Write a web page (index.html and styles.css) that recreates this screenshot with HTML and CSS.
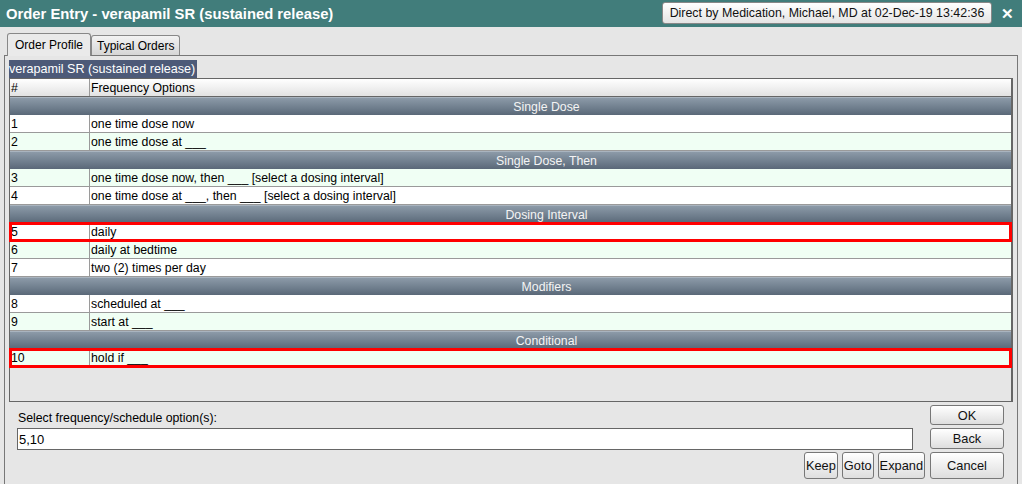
FILE: index.html
```html
<!DOCTYPE html>
<html lang="en">

<head>
    <meta charset="UTF-8">
    <title>Order Entry - verapamil SR (sustained release)</title>
    <link rel="stylesheet" href="styles.css">
</head>

<body>
    <div class="window">
        <div class="titlebar">
            <div class="title">Order Entry - verapamil SR (sustained release)</div>
            <div class="provider">Direct by Medication, Michael, MD at 02-Dec-19 13:42:36</div>
            <div class="close">&#x2715;</div>
        </div>

        <div class="tabs">
            <div class="tab active">Order Profile</div>
            <div class="tab">Typical Orders</div>
        </div>

        <div class="panel">
            <div class="caption">verapamil SR (sustained release)</div>
            <div class="grid">
                <div class="row head">
                    <div class="num">#</div>
                    <div class="text">Frequency Options</div>
                </div>

                <div class="group">Single Dose</div>
                <div class="row"><div class="num">1</div><div class="text">one time dose now</div></div>
                <div class="row alt"><div class="num">2</div><div class="text">one time dose at ___</div></div>

                <div class="group">Single Dose, Then</div>
                <div class="row alt"><div class="num">3</div><div class="text">one time dose now, then ___ [select a dosing interval]</div></div>
                <div class="row"><div class="num">4</div><div class="text">one time dose at ___, then ___ [select a dosing interval]</div></div>

                <div class="group">Dosing Interval</div>
                <div class="row picked"><div class="num">5</div><div class="text">daily</div></div>
                <div class="row alt"><div class="num">6</div><div class="text">daily at bedtime</div></div>
                <div class="row"><div class="num">7</div><div class="text">two (2) times per day</div></div>

                <div class="group">Modifiers</div>
                <div class="row"><div class="num">8</div><div class="text">scheduled at ___</div></div>
                <div class="row alt"><div class="num">9</div><div class="text">start at ___</div></div>

                <div class="group">Conditional</div>
                <div class="row alt picked"><div class="num">10</div><div class="text">hold if ___</div></div>
            </div>

            <div class="footer">
                <div class="label">Select frequency/schedule option(s):</div>
                <button class="btn wide">OK</button>
                <div class="entry">5,10</div>
                <button class="btn wide">Back</button>
                <div class="actions">
                    <button class="btn">Keep</button>
                    <button class="btn">Goto</button>
                    <button class="btn">Expand</button>
                </div>
                <button class="btn wide">Cancel</button>
            </div>
        </div>
    </div>
</body>

</html>
```

FILE: styles.css
```css
body {
    margin: 0;
    font-family: "Liberation Sans", Arial, sans-serif;
    font-size: 12.3px;
    color: #000;
    background-color: #e6e6e6;
}

.window {
    width: 1022px;
    height: 484px;
    overflow: hidden;
}

.titlebar {
    height: 27px;
    background-color: #417d7b;
    display: flex;
    align-items: center;
    color: #fff;
}

.title {
    flex: 1;
    padding-left: 6px;
    font-size: 14.8px;
    font-weight: bold;
}

.provider {
    width: 330px;
    height: 22px;
    box-sizing: border-box;
    margin-top: -2px;
    border: 1px solid #888;
    border-radius: 3px;
    background: linear-gradient(#ffffff, #e4e4e4);
    color: #111;
    font-size: 12.4px;
    line-height: 20px;
    text-align: center;
    white-space: nowrap;
}

.close {
    width: 30px;
    text-align: center;
    font-size: 15px;
    font-weight: bold;
}

.tabs {
    display: flex;
    padding: 6px 0 0 7px;
    height: 22px;
    align-items: flex-end;
    font-size: 12px;
}

.tab {
    height: 19px;
    padding: 0 5px;
    border: 1px solid #888;
    border-bottom: none;
    border-radius: 3px 3px 0 0;
    background: linear-gradient(#f2f2f2, #d6d6d6);
    line-height: 20px;
}

.tab.active {
    height: 22px;
    padding: 0 7px;
    background: #eaeaea;
    line-height: 23px;
    position: relative;
    top: 1px;
}

.panel {
    margin: 0 4px 0 4px;
    height: 430px;
    border: 1px solid #777;
    border-bottom: none;
    padding: 4px 4px 0 4px;
    box-sizing: border-box;
}

.caption {
    display: inline-block;
    height: 18px;
    line-height: 18px;
    padding-right: 2px;
    background-color: #4d5a78;
    color: #fff;
    font-size: 12.6px;
}

.grid {
    height: 324px;
    border: 1px solid #666;
    border-right-width: 2px;
    box-sizing: border-box;
    background-color: #e6e6e6;
}

.row {
    display: flex;
    height: 18px;
    border-bottom: 1px solid #9a9a9a;
    box-sizing: border-box;
    background-color: #fff;
    line-height: 19px;
}

.row.alt {
    background-color: #f0fff4;
}

.row.head {
    background: linear-gradient(#ffffff, #e2e2e2);
    border-bottom-color: #666;
}

.num {
    width: 78px;
    padding-left: 1px;
    border-right: 1px solid #9a9a9a;
}

.text {
    padding-left: 1px;
}

.row.picked {
    outline: 3px solid #f00;
    outline-offset: -2px;
}

.group {
    height: 18px;
    line-height: 18px;
    padding-left: 72px;
    background: linear-gradient(#8c9aa8, #6e7d8c 60%, #5a6878);
    border-top: 1px solid #a9b4bf;
    box-sizing: border-box;
    color: #f4f4f4;
    text-align: center;
}

.footer {
    display: grid;
    grid-template-columns: 1fr 74px;
    grid-template-rows: 20px 21px 27px;
    column-gap: 5px;
    row-gap: 3px;
    padding: 3px 9px 0 8px;
}

.label {
    align-self: end;
    padding-left: 1px;
}

.entry {
    width: 896px;
    height: 22px;
    box-sizing: border-box;
    border: 1px solid #666;
    background-color: #fff;
    padding-left: 1px;
    line-height: 21px;
    font-size: 13px;
}

.actions {
    display: flex;
    justify-content: flex-end;
    gap: 4px;
}

.btn {
    font-family: "Liberation Sans", Arial, sans-serif;
    font-size: 12.8px;
    color: #111;
    padding: 0 1px;
    border: 1px solid #777;
    border-radius: 3px;
    background: linear-gradient(#ffffff, #dedede);
}

.btn.wide {
    width: 74px;
}
```
